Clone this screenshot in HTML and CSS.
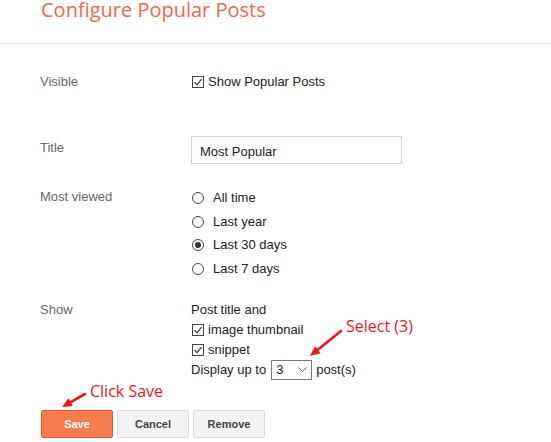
FILE: index.html
```html
<!DOCTYPE html>
<html lang="en">
<head>
<meta charset="utf-8">
<title>Configure Popular Posts</title>
<link rel="stylesheet" href="styles.css">
</head>
<body>
<div class="page">
  <header class="head">
    <h1 class="title">Configure Popular Posts</h1>
  </header>
  <form class="form">
    <div class="row row-visible">
      <div class="label">Visible</div>
      <div class="field">
        <label class="check"><span class="box"><svg viewBox="0 0 10 10" width="10" height="10"><path d="M1.6 5.2 L4 7.6 L8.6 2.2" fill="none" stroke="#333" stroke-width="1.2"/></svg></span>Show Popular Posts</label>
      </div>
    </div>
    <div class="row row-title">
      <div class="label label-title">Title</div>
      <div class="field"><input class="input" type="text" value="Most Popular"></div>
    </div>
    <div class="row row-mv">
      <div class="label label-mv">Most viewed</div>
      <div class="field">
        <div class="radio-line"><span class="radio"></span>All time</div>
        <div class="radio-line"><span class="radio"></span>Last year</div>
        <div class="radio-line"><span class="radio on"><span class="dot"></span></span>Last 30 days</div>
        <div class="radio-line"><span class="radio"></span>Last 7 days</div>
      </div>
    </div>
    <div class="row row-show">
      <div class="label label-show">Show</div>
      <div class="field">
        <div class="show-line">Post title and</div>
        <div class="show-line"><span class="box"><svg viewBox="0 0 10 10" width="10" height="10"><path d="M1.6 5.2 L4 7.6 L8.6 2.2" fill="none" stroke="#333" stroke-width="1.2"/></svg></span>image thumbnail</div>
        <div class="show-line"><span class="box"><svg viewBox="0 0 10 10" width="10" height="10"><path d="M1.6 5.2 L4 7.6 L8.6 2.2" fill="none" stroke="#333" stroke-width="1.2"/></svg></span>snippet</div>
        <div class="show-line">Display up to<span class="select"><span>3</span><svg viewBox="0 0 9 5" width="9" height="5"><path d="M0.5 0.5 L4.5 4.5 L8.5 0.5" fill="none" stroke="#555" stroke-width="1"/></svg></span>post(s)</div>
      </div>
    </div>
    <div class="buttons">
      <button type="button" class="btn btn-save">Save</button>
      <button type="button" class="btn">Cancel</button>
      <button type="button" class="btn">Remove</button>
    </div>
  </form>
  <div class="note note-save">Click Save</div>
  <div class="note note-select">Select (3)</div>
  <svg class="arrows" width="551" height="442" viewBox="0 0 551 442">
    <line x1="85" y1="394" x2="70.7" y2="402.1" stroke="#f01414" stroke-width="2.6" stroke-linecap="round"/>
    <polygon points="62,407 72.9,406 68.5,398.2" fill="#f01414"/>
    <line x1="341" y1="331" x2="317.8" y2="349.7" stroke="#f01414" stroke-width="2.6" stroke-linecap="round"/>
    <polygon points="310,356 320.6,353.2 315,346.2" fill="#f01414"/>
  </svg>
</div>
</body>
</html>
```

FILE: styles.css
```css
html, body {
  margin: 0;
  padding: 0;
  background: #fff;
}

body {
  font-family: Arial, "Liberation Sans", sans-serif;
  font-size: 13px;
  color: #222;
}

.page {
  position: relative;
  width: 551px;
  height: 442px;
  overflow: hidden;
}

.head {
  height: 43px;
  border-bottom: 1px solid #e5e5e5;
}

.title {
  margin: 0;
  padding-left: 41px;
  font-family: "Open Sans", sans-serif;
  font-weight: 400;
  font-size: 20px;
  line-height: 20px;
  color: #f4683f;
}

.form {
  padding-left: 40px;
}

.row {
  display: grid;
  grid-template-columns: 151px 1fr;
}

.label {
  color: #666;
  line-height: 16px;
}

.row-visible {
  margin-top: 30px;
}

.check {
  display: flex;
  align-items: center;
  line-height: 16px;
}

.box {
  width: 12px;
  height: 12px;
  box-sizing: border-box;
  border: 1px solid #444;
  margin: 0 4px 0 1px;
  display: flex;
  align-items: center;
  justify-content: center;
  background: #fff;
}

.box svg {
  display: block;
}

.row-title {
  margin-top: 46px;
}

.label-title {
  padding-top: 3.5px;
}

.input {
  display: block;
  width: 211px;
  height: 28px;
  box-sizing: border-box;
  border: 1px solid #d4d4d4;
  padding: 3px 8px 0;
  margin: 0;
  font-family: Arial, "Liberation Sans", sans-serif;
  font-size: 13px;
  color: #222;
  outline: none;
}

.row-mv {
  margin-top: 22px;
}

.label-mv {
  padding-top: 2.5px;
}

.radio-line {
  display: flex;
  align-items: center;
  height: 23.7px;
  line-height: 23.7px;
}

.radio {
  width: 12px;
  height: 12px;
  box-sizing: border-box;
  border: 1px solid #444;
  border-radius: 50%;
  margin: 0 9px 0 1px;
  display: flex;
  align-items: center;
  justify-content: center;
}

.dot {
  width: 6px;
  height: 6px;
  border-radius: 50%;
  background: #333;
}

.row-show {
  margin-top: 19px;
}

.label-show {
  line-height: 20px;
}

.show-line {
  display: flex;
  align-items: center;
  height: 20px;
  line-height: 20px;
}

.select {
  display: flex;
  align-items: center;
  justify-content: space-between;
  width: 41px;
  height: 20px;
  box-sizing: border-box;
  border: 1px solid #7a7a7a;
  padding: 0 4px 0 4px;
  margin: 0 4px 0 5px;
  line-height: 18px;
}

.select svg {
  display: block;
}

.buttons {
  display: flex;
  gap: 4px;
  margin-top: 30px;
  margin-left: 1px;
}

.btn {
  width: 72px;
  height: 28px;
  box-sizing: border-box;
  border: 1px solid #d8d8d8;
  border-radius: 2px;
  background: #f3f3f3;
  color: #444;
  font-family: Arial, "Liberation Sans", sans-serif;
  font-weight: 700;
  font-size: 11px;
  padding: 0;
  margin: 0;
}

.btn-save {
  background: #f77b4e;
  border-color: #e05a2c;
  color: #fff;
}

.note {
  position: absolute;
  font-family: "Open Sans", sans-serif;
  font-size: 16px;
  line-height: 20px;
  color: #f01414;
  white-space: nowrap;
}

.note-save {
  left: 90px;
  top: 381px;
}

.note-select {
  left: 346px;
  top: 316px;
}

.arrows {
  position: absolute;
  left: 0;
  top: 0;
  pointer-events: none;
}
```
